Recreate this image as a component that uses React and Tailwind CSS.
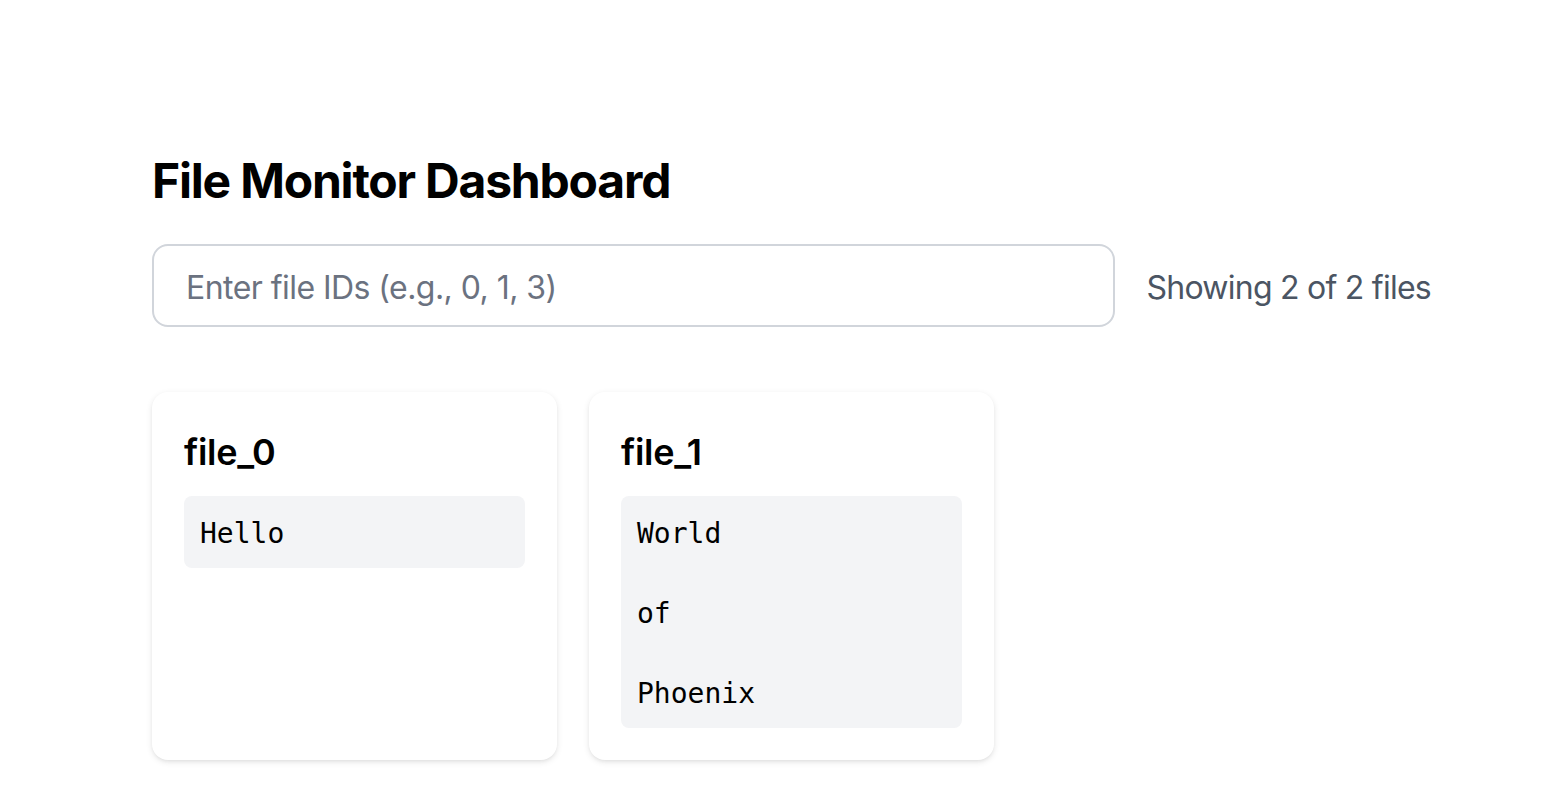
export default function App() {
  const files = [
    { name: "file_0", content: "Hello" },
    { name: "file_1", content: "World\n\nof\n\nPhoenix" },
  ];
  return (
    <div className="min-h-screen bg-white pt-[150px] pl-[152px]" style={{ fontFamily: "Inter, 'Noto Sans', sans-serif" }}>
      <div className="w-[1279px]">
        <h1 className="text-[48px] leading-[62px] font-bold text-black mb-[32px] tracking-[-1.2px]">File Monitor Dashboard</h1>
        <div className="flex items-center gap-[32px] mb-[65px]">
          <input
            type="text"
            placeholder="Enter file IDs (e.g., 0, 1, 3)"
            className="flex-1 h-[83px] border-2 border-[#d1d5db] rounded-[16px] px-[32px] pt-[4px] text-[32px] tracking-[-0.55px] text-black placeholder:text-[#6b7280] outline-none"
          />
          <span className="text-[32px] pt-[4px] tracking-[-0.75px] text-[#4b5563] whitespace-nowrap">Showing 2 of 2 files</span>
        </div>
        <div className="grid grid-cols-3 gap-[32px]">
          {files.map((f) => (
            <div key={f.name} className="bg-white rounded-[16px] p-[32px] shadow-[0_2px_6px_rgba(0,0,0,0.1),0_2px_4px_-2px_rgba(0,0,0,0.08)]">
              <h2 className="text-[36px] leading-[56px] font-semibold text-black mb-[16px] tracking-[-0.3px]">{f.name}</h2>
              <pre
                className="bg-[#f3f4f6] rounded-[8px] px-[16px] pt-[18px] pb-[14px] text-[28px] leading-[40px] text-black whitespace-pre-wrap"
                style={{ fontFamily: "'DejaVu Sans Mono', 'Liberation Mono', monospace" }}
              >
                {f.content}
              </pre>
            </div>
          ))}
        </div>
      </div>
    </div>
  );
}
